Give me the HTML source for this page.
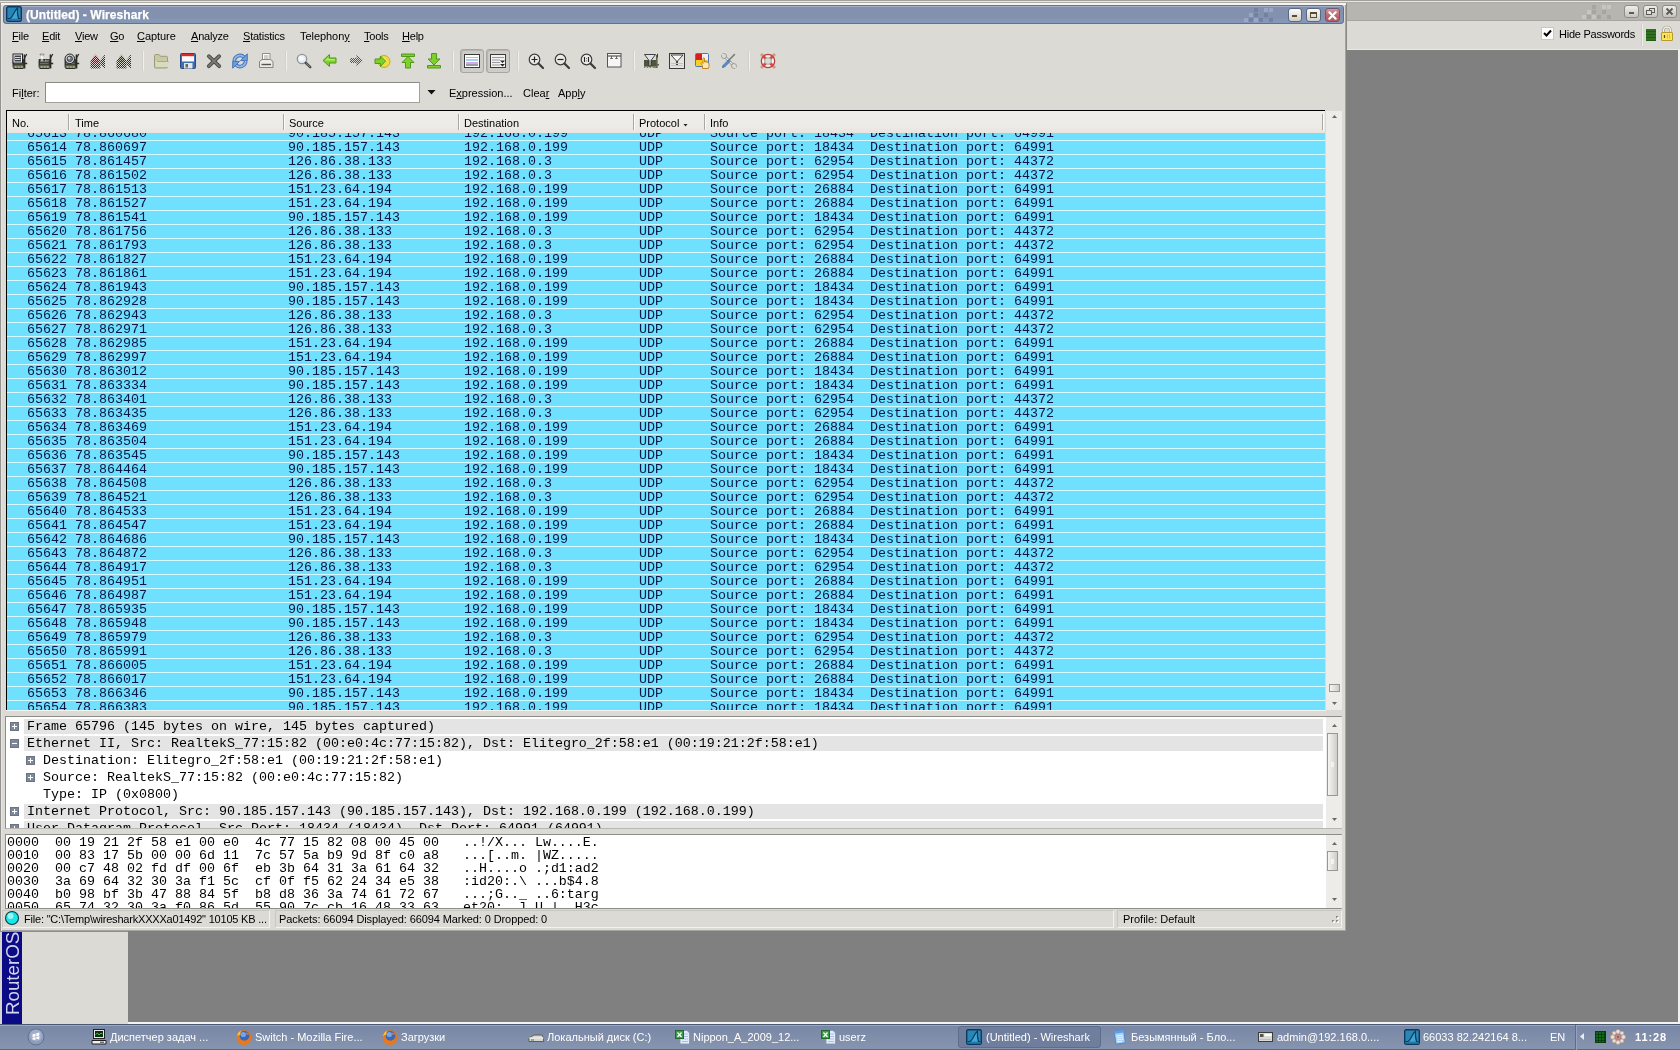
<!DOCTYPE html>
<html><head><meta charset="utf-8"><title>(Untitled) - Wireshark</title>
<style>
html,body{margin:0;padding:0}
body{width:1680px;height:1050px;overflow:hidden;background:#808080;position:relative;font-family:"Liberation Sans",sans-serif;font-size:11px;color:#000;line-height:13px}
.a{position:absolute}
.t{position:absolute;white-space:pre;font-family:"Liberation Sans",sans-serif;font-size:11px;line-height:13px}
.m{position:absolute;white-space:pre;font-family:"Liberation Mono",monospace;font-size:13.33px;margin:0}
u{text-decoration:underline;text-underline-offset:1px}
svg{position:absolute;overflow:visible}
</style></head><body><div id="wrap" style="position:absolute;left:0;top:0;width:1680px;height:1050px;will-change:transform">

<!-- top strip of background app -->
<div class="a" style="left:0;top:3px;width:1px;height:1021px;background:#939290"></div>
<div class="a" style="left:0;top:0;width:1680px;height:1px;background:#a09f9a"></div>
<div class="a" style="left:0;top:1px;width:1680px;height:1px;background:#eae8e3"></div>
<div class="a" style="left:0;top:2px;width:1680px;height:1px;background:#adaba6"></div>
<!-- right background window: inactive title + toolbar -->
<div class="a" style="left:1347px;top:3px;width:333px;height:17px;background:#b7b5af"></div>
<div class="a" style="left:1347px;top:20px;width:333px;height:1px;background:#a8a6a0"></div>
<div class="a" style="left:1347px;top:21px;width:333px;height:29px;background:#dcdad5;box-shadow:inset 0 -1px 0 #e9e8e4"></div>
<div class="a" style="left:1346px;top:3px;width:1px;height:47px;background:#8a8986"></div>
<div class="a" style="left:1678px;top:50px;width:2px;height:974px;background:#f1f0ee"></div>
<!-- bottom-left: RouterOS strip + panel -->
<div class="a" style="left:0;top:931px;width:128px;height:1px;background:#8f8e8b"></div>
<div class="a" style="left:0;top:932px;width:2px;height:92px;background:#d6d4cf"></div>
<div class="a" style="left:2px;top:932px;width:20px;height:92px;background:#0b0b86;overflow:hidden"></div>
<div class="a" style="left:22px;top:932px;width:106px;height:92px;background:#dcdad5"></div>
<div class="a" style="left:128px;top:1022px;width:1552px;height:2px;background:#f4f3f1"></div>

<div class="a" style="left:0;top:1024px;width:1680px;height:26px;background:linear-gradient(#7786a4,#8795b0)"></div>
<div class="a" style="left:0;top:1024px;width:1680px;height:1px;background:#4a5872"></div><div class="a" style="left:0;top:1025px;width:1680px;height:1px;background:#9aa8c6"></div><div class="a" style="left:0;top:1049px;width:1680px;height:1px;background:#5a6785"></div>

<div id="win" class="a" style="left:1px;top:3px;width:1345px;height:928px;background:#dcdad5;box-shadow:inset 0 2px 0 #f6f5f3, inset 1px 0 0 #e6e5e1, inset -1px -1px 0 #a5a39f"></div>
<div class="a" style="left:3px;top:5px;width:1341px;height:19px;border-radius:4px;background:linear-gradient(#8390ae 0,#8490ae 70%,#8196b8 76%,#8797b5 100%);box-shadow:inset 0 0 0 1px #64718d, inset 0 2px 0 #a5afc8"></div>
<svg style="left:6px;top:6px" width="16" height="16" viewBox="0 0 16 16"><rect x=".700" y=".700" width="14.600" height="14.600" rx="1.500" fill="#2b86b8" stroke="#0b3a5c" stroke-width="1.400"/><path d="M1.500 12.500h2.500C7 11 8.500 4 11.500 2c-.3 3.500 0 7.500 1 10.500h2" fill="#3fa6d6" stroke="#0b3a5c" stroke-width="1.200" stroke-linejoin="round"/><path d="M1.500 13h13v1.500h-13z" fill="#2379a9"/></svg><div class="t" style="left:26px;top:8px;font-size:12px;line-height:14px;font-weight:700;color:#fff;letter-spacing:.08px;-webkit-text-stroke:.25px #fff">(Untitled) - Wireshark</div><svg style="left:1244px;top:7px" width="34" height="18"><rect x="10" y="1" width="4" height="4" fill="#61759c" opacity=".55"/><rect x="20" y="1" width="4" height="4" fill="#a9b8d6" opacity=".55"/><rect x="25" y="1" width="4" height="4" fill="#a9b8d6" opacity=".55"/><rect x="5" y="6" width="4" height="4" fill="#a9b8d6" opacity=".55"/><rect x="10" y="6" width="4" height="4" fill="#61759c" opacity=".55"/><rect x="20" y="6" width="4" height="4" fill="#61759c" opacity=".55"/><rect x="0" y="11" width="4" height="4" fill="#a9b8d6" opacity=".55"/><rect x="5" y="11" width="4" height="4" fill="#61759c" opacity=".55"/><rect x="15" y="11" width="4" height="4" fill="#61759c" opacity=".55"/><rect x="25" y="11" width="4" height="4" fill="#61759c" opacity=".55"/><rect x="10" y="11" width="4" height="4" fill="#a9b8d6" opacity=".55"/></svg><div class="a" style="left:1288px;top:8px;width:14px;height:14px;box-sizing:border-box;border:1px solid #5a6888;border-radius:3px;background:linear-gradient(#fbfbfa,#e6e4df 55%,#cfcdc7)"></div><div class="a" style="left:1292px;top:15px;width:5px;height:2px;background:#5c4c2c"></div><div class="a" style="left:1306px;top:8px;width:15px;height:14px;box-sizing:border-box;border:1px solid #5a6888;border-radius:3px;background:linear-gradient(#fbfbfa,#e6e4df 55%,#cfcdc7)"></div><div class="a" style="left:1310px;top:12px;width:7px;height:6px;box-sizing:border-box;border:1px solid #5c4c2c;border-top-width:2px"></div><div class="a" style="left:1325px;top:8px;width:15px;height:14px;box-sizing:border-box;border:1px solid #6f5a70;border-radius:3px;background:linear-gradient(#d3979c,#c0656d 55%,#b55a63)"></div><svg style="left:1328px;top:10.500px" width="9" height="9" viewBox="0 0 9 9"><path d="M1.300 1.300l6.400 6.400M7.700 1.300l-6.400 6.400" stroke="#fff" stroke-width="2.100" stroke-linecap="round"/></svg><div class="t" style="left:12px;top:30px;letter-spacing:-.22px"><u>F</u>ile</div><div class="t" style="left:42px;top:30px;letter-spacing:-.22px"><u>E</u>dit</div><div class="t" style="left:75px;top:30px;letter-spacing:-.22px"><u>V</u>iew</div><div class="t" style="left:110px;top:30px;letter-spacing:-.22px"><u>G</u>o</div><div class="t" style="left:137px;top:30px;letter-spacing:-.05px"><u>C</u>apture</div><div class="t" style="left:191px;top:30px;letter-spacing:-.22px"><u>A</u>nalyze</div><div class="t" style="left:243px;top:30px;letter-spacing:-.22px"><u>S</u>tatistics</div><div class="t" style="left:300px;top:30px;letter-spacing:-.05px">Telephon<u>y</u></div><div class="t" style="left:364px;top:30px;letter-spacing:-.22px"><u>T</u>ools</div><div class="t" style="left:402px;top:30px;letter-spacing:-.22px"><u>H</u>elp</div><svg style="left:12px;top:53px" width="16" height="16" viewBox="0 0 16 16"><path d="M1 6.500h10.500v8H1z" fill="#3f4539" stroke="#1e211b" stroke-width=".8"/><path d="M2 8.500h8.500M2 10.500h8.500" stroke="#69735a" stroke-width="1"/><path d="M1.500 12.500h10v2.500h-10z" fill="#7a8162"/><path d="M1.500 15.500h10" stroke="#2a2d24" stroke-width="1"/><path d="M3 14h1.500M6 14h1.500M9 14h1.500" stroke="#c9cba6" stroke-width="1"/><path d="M12.500 1.500v14" stroke="#2a2d24" stroke-width="1.700"/><path d="M12.800 4.500l2-3.500" stroke="#2a2d24" stroke-width="1.200"/><path d="M13 10.500h2.200" stroke="#2a2d24" stroke-width="1.500"/><rect x="1" y="1" width="9.500" height="9" fill="#f2f2f2" stroke="#1f2226" stroke-width="1"/><rect x="2.500" y="2.500" width="6.500" height="6" fill="#3c3f45"/><path d="M3 4.500h5.500M3 6.500h5.500" stroke="#d5d8dc" stroke-width="1"/></svg><svg style="left:38px;top:53px" width="16" height="16" viewBox="0 0 16 16"><path d="M1 6.500h10.500v8H1z" fill="#3f4539" stroke="#1e211b" stroke-width=".8"/><path d="M2 8.500h8.500M2 10.500h8.500" stroke="#69735a" stroke-width="1"/><path d="M1.500 12.500h10v2.500h-10z" fill="#7a8162"/><path d="M1.500 15.500h10" stroke="#2a2d24" stroke-width="1"/><path d="M3 14h1.500M6 14h1.500M9 14h1.500" stroke="#c9cba6" stroke-width="1"/><path d="M12.500 1.500v14" stroke="#2a2d24" stroke-width="1.700"/><path d="M12.800 4.500l2-3.500" stroke="#2a2d24" stroke-width="1.200"/><path d="M13 10.500h2.200" stroke="#2a2d24" stroke-width="1.500"/><path d="M2.500 1.500h3M4 1.500v6M2.500 7.500h3" stroke="#fff" stroke-width="1.300"/><path d="M2 1h4v1H2zM2 7h4v1H2z" fill="none" stroke="#2a2d24" stroke-width=".4"/><path d="M7 7.500h1.500M9.500 7.500h1" stroke="#aeb493" stroke-width="1.400"/></svg><svg style="left:64px;top:53px" width="16" height="16" viewBox="0 0 16 16"><path d="M1 6.500h10.500v8H1z" fill="#3f4539" stroke="#1e211b" stroke-width=".8"/><path d="M2 8.500h8.500M2 10.500h8.500" stroke="#69735a" stroke-width="1"/><path d="M1.500 12.500h10v2.500h-10z" fill="#7a8162"/><path d="M1.500 15.500h10" stroke="#2a2d24" stroke-width="1"/><path d="M3 14h1.500M6 14h1.500M9 14h1.500" stroke="#c9cba6" stroke-width="1"/><path d="M12.500 1.500v14" stroke="#2a2d24" stroke-width="1.700"/><path d="M12.800 4.500l2-3.500" stroke="#2a2d24" stroke-width="1.200"/><path d="M13 10.500h2.200" stroke="#2a2d24" stroke-width="1.500"/><circle cx="5.800" cy="5.800" r="4.800" fill="#c9ccd0" stroke="#24272a" stroke-width="1"/><circle cx="5.800" cy="5.800" r="2.700" fill="#7b8087" stroke="#3a3d42" stroke-width=".9"/><circle cx="5" cy="5" r="1" fill="#e9ebee"/></svg><svg style="left:90px;top:53px" width="16" height="16" viewBox="0 0 16 16"><defs><pattern id="st" width="2" height="2" patternUnits="userSpaceOnUse"><rect width="1" height="1" fill="#2c2e28"/><rect x="1" y="1" width="1" height="1" fill="#2c2e28"/></pattern></defs><circle cx="5.500" cy="6.500" r="3.200" fill="#e7a7ab"/><circle cx="5.500" cy="6" r="1.500" fill="#f6dadb"/><path d="M.500 8L5.500 1.500 10.500 8v7.500H.500z" fill="url(#st)"/><path d="M10.500 7l4.500-5.500v14L10.500 11z" fill="url(#st)"/></svg><svg style="left:116px;top:53px" width="16" height="16" viewBox="0 0 16 16"><circle cx="5.500" cy="6.500" r="3" fill="#b4b89c"/><path d="M.500 8L5.500 1.500 10.500 8v7.500H.500z" fill="url(#st)"/><path d="M10.500 7l4.500-5.500v14L10.500 11z" fill="url(#st)"/></svg><div class="a" style="left:142px;top:51px;width:1px;height:20px;background:#d2d0cb"></div><div class="a" style="left:143px;top:51px;width:1px;height:20px;background:#f1f0ed"></div><svg style="left:154px;top:53px" width="16" height="16" viewBox="0 0 16 16"><path d="M.5 2.500c0-.6.400-1 1-1h3.500l1.500 1.800h6c.6 0 1 .4 1 1V14c0 .6-.4 1-1 1h-11c-.6 0-1-.4-1-1z" fill="#c6c9a3" stroke="#9a9d78"/><path d="M1.500 8h13v6h-13z" fill="#d9dbbd"/><path d="M3 8.500h11.500" stroke="#a9ac88"/></svg><svg style="left:180px;top:53px" width="16" height="16" viewBox="0 0 16 16"><rect x=".5" y=".5" width="15" height="15" rx="1" fill="#3f6db0" stroke="#2a4b80"/><rect x="2" y="1" width="12" height="7.500" fill="#fbfbfb"/><rect x="2" y="1" width="12" height="2.200" fill="#e0242c"/><rect x="4" y="10" width="8.500" height="5.500" fill="#e4e6ea"/><rect x="5.500" y="11" width="2.500" height="3.500" fill="#56705a"/></svg><svg style="left:206px;top:53px" width="16" height="16" viewBox="0 0 16 16"><path d="M2.800 3.200l10.400 10M13.200 3.200l-10.400 10" stroke="#4c4c48" stroke-width="3.800" stroke-linecap="round"/><path d="M2.800 3.200l10.400 10M13.200 3.200l-10.400 10" stroke="#7c7c74" stroke-width="1.800" stroke-linecap="round"/></svg><svg style="left:232px;top:53px" width="16" height="16" viewBox="0 0 16 16"><path d="M2.300 8.200a5.700 5.700 0 0 1 9.800-4" fill="none" stroke="#3d6db3" stroke-width="3.600"/><path d="M2.300 8.200a5.700 5.700 0 0 1 9.800-4" fill="none" stroke="#8fb8ec" stroke-width="1.900"/><path d="M15.300 .800v6.800H8.500z" fill="#6c9ddf" stroke="#3d6db3" stroke-width=".9"/><g transform="rotate(180 8 8)"><path d="M2.300 8.200a5.700 5.700 0 0 1 9.800-4" fill="none" stroke="#3d6db3" stroke-width="3.600"/><path d="M2.300 8.200a5.700 5.700 0 0 1 9.800-4" fill="none" stroke="#8fb8ec" stroke-width="1.900"/><path d="M15.300 .800v6.800H8.500z" fill="#6c9ddf" stroke="#3d6db3" stroke-width=".9"/></g></svg><svg style="left:258px;top:53px" width="16" height="16" viewBox="0 0 16 16"><path d="M4.500.5h7.500v7H4.500z" fill="#fdfdfd" stroke="#8e8e88"/><path d="M6 3h4.500M6 5h4.500" stroke="#a0a09a"/><path d="M1.500 8.500l2.500-2h8.500l2.500 2v6h-13.500z" fill="#ecebe6" stroke="#85847e"/><path d="M3.500 11.500h9.500" stroke="#55554f" stroke-width="1.400"/></svg><div class="a" style="left:285px;top:51px;width:1px;height:20px;background:#d2d0cb"></div><div class="a" style="left:286px;top:51px;width:1px;height:20px;background:#f1f0ed"></div><svg style="left:296px;top:53px" width="16" height="16" viewBox="0 0 16 16"><circle cx="6" cy="6" r="4.700" fill="#e7ecf3" stroke="#8f949c" stroke-width="1.300"/><circle cx="5.400" cy="5.400" r="2.400" fill="#f9fbff"/><path d="M9.800 9.800l4.400 4.400" stroke="#4a4a4a" stroke-width="2.600" stroke-linecap="round"/><path d="M10.500 10.500l3.300 3.300" stroke="#8c8c8c" stroke-width="1" stroke-linecap="round"/></svg><svg style="left:322px;top:53px" width="16" height="16" viewBox="0 0 16 16"><path d="M1 7.500L7.500 1.500v3.500H14v5H7.500v3.500z" fill="#7fcf2f" stroke="#4f9a16" stroke-width="1"/><path d="M3 7.500l3.500-3.200V6h6.500v1.500z" fill="#b3ec73"/></svg><svg style="left:348px;top:53px" width="16" height="16" viewBox="0 0 16 16"><defs><pattern id="sg" width="2" height="2" patternUnits="userSpaceOnUse"><rect width="1" height="1" fill="#4e5f44"/><rect x="1" y="1" width="1" height="1" fill="#4e5f44"/></pattern></defs><path d="M15 7.500L8.500 1.500v3.500H2v5h6.500v3.500z" fill="url(#sg)"/></svg><svg style="left:374px;top:53px" width="16" height="16" viewBox="0 0 16 16"><circle cx="10" cy="8.500" r="6" fill="#f1dc3c" stroke="#c9a91d"/><circle cx="8.500" cy="7" r="3" fill="#f9ef8b" opacity=".7"/><path d="M11.500 8L6.500 3v3H1v4.500h5.500v3z" fill="#7fcf2f" stroke="#4f9a16" stroke-width="1"/></svg><svg style="left:400px;top:53px" width="16" height="16" viewBox="0 0 16 16"><path d="M1.500 1h13v2.500h-13z" fill="#7fcf2f" stroke="#4f9a16" stroke-width="1"/><path d="M8 3.500L14 9.500h-3.500V15h-5V9.500H2z" fill="#7fcf2f" stroke="#4f9a16" stroke-width="1"/></svg><svg style="left:426px;top:53px" width="16" height="16" viewBox="0 0 16 16"><path d="M1.500 12.500h13V15h-13z" fill="#7fcf2f" stroke="#4f9a16" stroke-width="1"/><path d="M8 12L14 6h-3.500V.5h-5V6H2z" fill="#7fcf2f" stroke="#4f9a16" stroke-width="1"/></svg><div class="a" style="left:452px;top:51px;width:1px;height:20px;background:#d2d0cb"></div><div class="a" style="left:453px;top:51px;width:1px;height:20px;background:#f1f0ed"></div><div class="a" style="left:460px;top:49px;width:24px;height:24px;box-sizing:border-box;border:1px solid #a8a6a0;border-radius:3px;background:#cfcdc8;box-shadow:inset 1px 1px 1px #b6b4ae"></div><div class="a" style="left:486px;top:49px;width:24px;height:24px;box-sizing:border-box;border:1px solid #a8a6a0;border-radius:3px;background:#cfcdc8;box-shadow:inset 1px 1px 1px #b6b4ae"></div><svg style="left:464px;top:53px" width="16" height="16" viewBox="0 0 16 16"><rect x=".5" y="1.500" width="15" height="13" fill="#fff" stroke="#3a3a3a"/><path d="M2 4.500h12" stroke="#f0b070"/><path d="M2 6h12v2H2z" fill="#9fd8e8"/><path d="M2 9h12v2H2z" fill="#d8a8f0"/><path d="M2 12h12" stroke="#707080" stroke-width="1.400"/></svg><svg style="left:490px;top:53px" width="16" height="16" viewBox="0 0 16 16"><rect x=".5" y="1.500" width="15" height="13" fill="#f2f2f2" stroke="#3a3a3a"/><path d="M2 4.500h12M2 7h8M2 9.500h8M2 12h8" stroke="#9a9a9a" stroke-width="1.200"/><path d="M10 7.500h5l-2.500 2.500zM10 11h5l-2.500 2.500z" fill="#222"/></svg><div class="a" style="left:517px;top:51px;width:1px;height:20px;background:#d2d0cb"></div><div class="a" style="left:518px;top:51px;width:1px;height:20px;background:#f1f0ed"></div><svg style="left:528px;top:53px" width="16" height="16" viewBox="0 0 16 16"><circle cx="6.500" cy="6.500" r="5.300" fill="#e9e9e6" stroke="#3c3c3c" stroke-width="1.200"/><path d="M10.500 10.500l4.500 4.500" stroke="#3c3c3c" stroke-width="2.200" stroke-linecap="round"/><path d="M3.500 6.500h6M6.500 3.500v6" stroke="#222" stroke-width="1.200"/></svg><svg style="left:554px;top:53px" width="16" height="16" viewBox="0 0 16 16"><circle cx="6.500" cy="6.500" r="5.300" fill="#e9e9e6" stroke="#3c3c3c" stroke-width="1.200"/><path d="M10.500 10.500l4.500 4.500" stroke="#3c3c3c" stroke-width="2.200" stroke-linecap="round"/><path d="M3.500 6.500h6" stroke="#222" stroke-width="1.200"/></svg><svg style="left:580px;top:53px" width="16" height="16" viewBox="0 0 16 16"><circle cx="6.500" cy="6.500" r="5.300" fill="#e9e9e6" stroke="#3c3c3c" stroke-width="1.200"/><path d="M10.500 10.500l4.500 4.500" stroke="#3c3c3c" stroke-width="2.200" stroke-linecap="round"/><path d="M4.500 4v5M8.500 4v5" stroke="#222" stroke-width="1.100"/><path d="M6.200 5.200h.8v.8h-.8zM6.200 7.400h.8v.8h-.8z" fill="#222"/></svg><svg style="left:606px;top:53px" width="16" height="16" viewBox="0 0 16 16"><rect x="1.500" y=".500" width="13.500" height="13.500" fill="#f6f6f4" stroke="#555"/><path d="M2 3h13" stroke="#555" stroke-width="1.200"/><path d="M5.500 3v3M10.500 3v3" stroke="#666"/><path d="M4 5.500h3M9 5.500h3" stroke="#666" stroke-width=".8"/></svg><div class="a" style="left:633px;top:51px;width:1px;height:20px;background:#d2d0cb"></div><div class="a" style="left:634px;top:51px;width:1px;height:20px;background:#f1f0ed"></div><svg style="left:643px;top:53px" width="16" height="16" viewBox="0 0 16 16"><path d="M1 7h12v7H1z" fill="#4d553e"/><path d="M1 13h12v2H1z" fill="#7d8468"/><path d="M13 2h1.600v13H13z" fill="#5d644c"/><path d="M14 1l1-.5v4H14zM14.400 11h1.400v1.500h-1.400z" fill="#3a4030"/><path d="M2 14.500h2M5 14.500h2M8 14.500h2" stroke="#c8c8a0" stroke-width="1"/><path d="M1.500 1.500h11L8 7.500v5.500H6V7.500z" fill="#dfe3e6" stroke="#2f2f2f" stroke-width=".9"/></svg><svg style="left:669px;top:53px" width="16" height="16" viewBox="0 0 16 16"><rect x=".500" y=".500" width="15" height="15" fill="#e4e4e1" stroke="#3a3a3a" stroke-width="1"/><path d="M2 2h12L8.500 8v4.500h-1V8z" fill="#fafafa" stroke="#333" stroke-width=".9"/><path d="M2 10.500h12M2 12.500h12" stroke="#c4c4c0"/></svg><svg style="left:695px;top:53px" width="16" height="16" viewBox="0 0 16 16"><rect x=".500" y=".500" width="13" height="13" rx="1" fill="#f5d21f" stroke="#4a78c0"/><rect x="1" y="1" width="6" height="6" fill="#d81e1e"/><rect x="7" y="1" width="6" height="6" fill="#f0f0f8"/><path d="M8 4v0" /><path d="M7.500 15.500v-3L6 10.500l1-1 1 1V5.500c0-1 1.500-1 1.500 0V9h1v-.5c0-.8 1.300-.8 1.300 0V9.500h.7c.8 0 1.500.5 1.500 1.500v2.500l-.7 2z" fill="#fbe9b5" stroke="#c07818" stroke-width=".9"/></svg><svg style="left:721px;top:53px" width="16" height="16" viewBox="0 0 16 16"><path d="M2.500 2.500L13 13" stroke="#8f8f8a" stroke-width="2.600" stroke-linecap="round"/><path d="M2.500 2.500L13 13" stroke="#e9e9e6" stroke-width="1.200" stroke-linecap="round"/><circle cx="3" cy="3" r="2.400" fill="#e9e9e6" stroke="#8f8f8a" stroke-width=".9"/><path d="M1 1l2.500 2.500" stroke="#dcdad5" stroke-width="1.800"/><circle cx="13" cy="13" r="2.400" fill="#e9e9e6" stroke="#8f8f8a" stroke-width=".9"/><path d="M15 15l-2.500-2.500" stroke="#dcdad5" stroke-width="1.800"/><path d="M13.500 1.500L7 8" stroke="#7d7d78" stroke-width="1.600" stroke-linecap="round"/><path d="M7.500 7L2 12.500 1.500 14.500 3.500 14 9 8.500z" fill="#5b8fd6" stroke="#3565a8" stroke-width=".8"/></svg><div class="a" style="left:748px;top:51px;width:1px;height:20px;background:#d2d0cb"></div><div class="a" style="left:749px;top:51px;width:1px;height:20px;background:#f1f0ed"></div><svg style="left:760px;top:53px" width="16" height="16" viewBox="0 0 16 16"><circle cx="8" cy="8" r="6.700" fill="#f4f1ee" stroke="#b9423a" stroke-width="1.300"/><path d="M3 3l3 3M13 3l-3 3M3 13l3-3M13 13l-3-3" stroke="#d24a40" stroke-width="2.800"/><circle cx="8" cy="8" r="3.300" fill="#dcdad5" stroke="#a8a6a0" stroke-width="1"/><rect x=".5" y=".5" width="3" height="3" rx="1" fill="#c9524a" opacity=".5"/><rect x="12.500" y=".5" width="3" height="3" rx="1" fill="#c9524a" opacity=".5"/><rect x=".5" y="12.500" width="3" height="3" rx="1" fill="#c9524a" opacity=".5"/><rect x="12.500" y="12.500" width="3" height="3" rx="1" fill="#c9524a" opacity=".5"/></svg><div class="t" style="left:12px;top:87px">Fi<u>l</u>ter:</div><div class="a" style="left:45px;top:82px;width:375px;height:21px;box-sizing:border-box;background:#fff;border:1px solid #a3a19c;border-top-color:#8c8a85;border-left-color:#8c8a85"></div><svg style="left:427px;top:90px" width="9" height="5"><path d="M.500 0h8l-4 4.500z" fill="#111"/></svg><div class="t" style="left:449px;top:87px">E<u>x</u>pression...</div><div class="t" style="left:523px;top:87px">Clea<u>r</u></div><div class="t" style="left:558px;top:87px">App<u>l</u>y</div><div class="a" style="left:6px;top:110px;width:1319px;height:600px;background:#000"></div><div class="a" style="left:7px;top:111px;width:1318px;height:22px;background:linear-gradient(#efeeea,#ecebe6 70%,#e9e4df)"></div><div class="a" style="left:68px;top:114px;width:1px;height:16px;background:#a9a7a1"></div><div class="a" style="left:69px;top:114px;width:1px;height:16px;background:#fbfbfa"></div><div class="a" style="left:283px;top:114px;width:1px;height:16px;background:#a9a7a1"></div><div class="a" style="left:284px;top:114px;width:1px;height:16px;background:#fbfbfa"></div><div class="a" style="left:458px;top:114px;width:1px;height:16px;background:#a9a7a1"></div><div class="a" style="left:459px;top:114px;width:1px;height:16px;background:#fbfbfa"></div><div class="a" style="left:633px;top:114px;width:1px;height:16px;background:#a9a7a1"></div><div class="a" style="left:634px;top:114px;width:1px;height:16px;background:#fbfbfa"></div><div class="a" style="left:704px;top:114px;width:1px;height:16px;background:#a9a7a1"></div><div class="a" style="left:705px;top:114px;width:1px;height:16px;background:#fbfbfa"></div><div class="a" style="left:1322px;top:114px;width:1px;height:16px;background:#a9a7a1"></div><div class="a" style="left:1323px;top:114px;width:1px;height:16px;background:#fbfbfa"></div><div class="t" style="left:12px;top:117px">No.</div><div class="t" style="left:75px;top:117px">Time</div><div class="t" style="left:289px;top:117px">Source</div><div class="t" style="left:464px;top:117px">Destination</div><div class="t" style="left:639px;top:117px">Protocol</div><div class="t" style="left:710px;top:117px">Info</div><svg style="left:683px;top:124px" width="5" height="3"><path d="M.500 0h4l-2 2.500z" fill="#222"/></svg><div class="a" style="left:7px;top:133px;width:1318px;height:577px;overflow:hidden;background:#70e0ff;color:#0b1745"><div class="a" style="left:0;top:0;width:1318px;height:577px;background:repeating-linear-gradient(to bottom,rgba(0,0,0,0) 0,rgba(0,0,0,0) 7px,#d6fbff 7px,#d6fbff 8px,rgba(0,0,0,0) 8px,rgba(0,0,0,0) 14px)"></div><pre class="m" style="left:20px;top:-6px;line-height:14px;">65613
65614
65615
65616
65617
65618
65619
65620
65621
65622
65623
65624
65625
65626
65627
65628
65629
65630
65631
65632
65633
65634
65635
65636
65637
65638
65639
65640
65641
65642
65643
65644
65645
65646
65647
65648
65649
65650
65651
65652
65653
65654</pre><pre class="m" style="left:68px;top:-6px;line-height:14px;">78.860680
78.860697
78.861457
78.861502
78.861513
78.861527
78.861541
78.861756
78.861793
78.861827
78.861861
78.861943
78.862928
78.862943
78.862971
78.862985
78.862997
78.863012
78.863334
78.863401
78.863435
78.863469
78.863504
78.863545
78.864464
78.864508
78.864521
78.864533
78.864547
78.864686
78.864872
78.864917
78.864951
78.864987
78.865935
78.865948
78.865979
78.865991
78.866005
78.866017
78.866346
78.866383</pre><pre class="m" style="left:281px;top:-6px;line-height:14px;">90.185.157.143
90.185.157.143
126.86.38.133
126.86.38.133
151.23.64.194
151.23.64.194
90.185.157.143
126.86.38.133
126.86.38.133
151.23.64.194
151.23.64.194
90.185.157.143
90.185.157.143
126.86.38.133
126.86.38.133
151.23.64.194
151.23.64.194
90.185.157.143
90.185.157.143
126.86.38.133
126.86.38.133
151.23.64.194
151.23.64.194
90.185.157.143
90.185.157.143
126.86.38.133
126.86.38.133
151.23.64.194
151.23.64.194
90.185.157.143
126.86.38.133
126.86.38.133
151.23.64.194
151.23.64.194
90.185.157.143
90.185.157.143
126.86.38.133
126.86.38.133
151.23.64.194
151.23.64.194
90.185.157.143
90.185.157.143</pre><pre class="m" style="left:457px;top:-6px;line-height:14px;">192.168.0.199
192.168.0.199
192.168.0.3
192.168.0.3
192.168.0.199
192.168.0.199
192.168.0.199
192.168.0.3
192.168.0.3
192.168.0.199
192.168.0.199
192.168.0.199
192.168.0.199
192.168.0.3
192.168.0.3
192.168.0.199
192.168.0.199
192.168.0.199
192.168.0.199
192.168.0.3
192.168.0.3
192.168.0.199
192.168.0.199
192.168.0.199
192.168.0.199
192.168.0.3
192.168.0.3
192.168.0.199
192.168.0.199
192.168.0.199
192.168.0.3
192.168.0.3
192.168.0.199
192.168.0.199
192.168.0.199
192.168.0.199
192.168.0.3
192.168.0.3
192.168.0.199
192.168.0.199
192.168.0.199
192.168.0.199</pre><pre class="m" style="left:632px;top:-6px;line-height:14px;">UDP
UDP
UDP
UDP
UDP
UDP
UDP
UDP
UDP
UDP
UDP
UDP
UDP
UDP
UDP
UDP
UDP
UDP
UDP
UDP
UDP
UDP
UDP
UDP
UDP
UDP
UDP
UDP
UDP
UDP
UDP
UDP
UDP
UDP
UDP
UDP
UDP
UDP
UDP
UDP
UDP
UDP</pre><pre class="m" style="left:703px;top:-6px;line-height:14px;">Source port: 18434  Destination port: 64991
Source port: 18434  Destination port: 64991
Source port: 62954  Destination port: 44372
Source port: 62954  Destination port: 44372
Source port: 26884  Destination port: 64991
Source port: 26884  Destination port: 64991
Source port: 18434  Destination port: 64991
Source port: 62954  Destination port: 44372
Source port: 62954  Destination port: 44372
Source port: 26884  Destination port: 64991
Source port: 26884  Destination port: 64991
Source port: 18434  Destination port: 64991
Source port: 18434  Destination port: 64991
Source port: 62954  Destination port: 44372
Source port: 62954  Destination port: 44372
Source port: 26884  Destination port: 64991
Source port: 26884  Destination port: 64991
Source port: 18434  Destination port: 64991
Source port: 18434  Destination port: 64991
Source port: 62954  Destination port: 44372
Source port: 62954  Destination port: 44372
Source port: 26884  Destination port: 64991
Source port: 26884  Destination port: 64991
Source port: 18434  Destination port: 64991
Source port: 18434  Destination port: 64991
Source port: 62954  Destination port: 44372
Source port: 62954  Destination port: 44372
Source port: 26884  Destination port: 64991
Source port: 26884  Destination port: 64991
Source port: 18434  Destination port: 64991
Source port: 62954  Destination port: 44372
Source port: 62954  Destination port: 44372
Source port: 26884  Destination port: 64991
Source port: 26884  Destination port: 64991
Source port: 18434  Destination port: 64991
Source port: 18434  Destination port: 64991
Source port: 62954  Destination port: 44372
Source port: 62954  Destination port: 44372
Source port: 26884  Destination port: 64991
Source port: 26884  Destination port: 64991
Source port: 18434  Destination port: 64991
Source port: 18434  Destination port: 64991</pre></div><div class="a" style="left:6px;top:710px;width:1320px;height:1px;background:#f3f6f5"></div><div class="a" style="left:1326px;top:111px;width:16px;height:599px;background:#edece8"></div><svg style="left:1332px;top:115px" width="5" height="3"><path d="M0 3h5l-2.500-3z" fill="#6a6964"/></svg><svg style="left:1332px;top:702px" width="5" height="3"><path d="M0 0h5l-2.500 3z" fill="#6a6964"/></svg><div class="a" style="left:1329px;top:684px;width:11px;height:8px;box-sizing:border-box;border:1px solid #9a9893;background:linear-gradient(to right,#f6f5f2,#cfcdc8)"></div><div class="a" style="left:5px;top:716px;width:1337px;height:113px;box-sizing:border-box;background:#fff;border:1px solid #8e8c87;border-right-color:#b9b7b2;border-bottom-color:#b9b7b2"></div><div class="a" style="left:7px;top:717px;width:1318px;height:111px;overflow:hidden"><div class="a" style="left:17px;top:2px;width:1299px;height:15px;background:#e4e4e4"></div><svg style="left:3px;top:5px" width="9" height="9" viewBox="0 0 9 9"><rect width="9" height="9" fill="#7c8797"/><rect x=".500" y=".500" width="8" height="8" fill="none" stroke="#6a7484"/><path d="M2 4.500h5M4.500 2v5" stroke="#fff" stroke-width="1"/></svg><pre class="m" style="left:20px;top:2px;line-height:15px;color:#000">Frame 65796 (145 bytes on wire, 145 bytes captured)</pre><div class="a" style="left:17px;top:19px;width:1299px;height:15px;background:#e4e4e4"></div><svg style="left:3px;top:22px" width="9" height="9" viewBox="0 0 9 9"><rect width="9" height="9" fill="#7c8797"/><rect x=".500" y=".500" width="8" height="8" fill="none" stroke="#6a7484"/><path d="M2 4.500h5" stroke="#fff" stroke-width="1"/></svg><pre class="m" style="left:20px;top:19px;line-height:15px;color:#000">Ethernet II, Src: RealtekS_77:15:82 (00:e0:4c:77:15:82), Dst: Elitegro_2f:58:e1 (00:19:21:2f:58:e1)</pre><svg style="left:19px;top:39px" width="9" height="9" viewBox="0 0 9 9"><rect width="9" height="9" fill="#7c8797"/><rect x=".500" y=".500" width="8" height="8" fill="none" stroke="#6a7484"/><path d="M2 4.500h5M4.500 2v5" stroke="#fff" stroke-width="1"/></svg><pre class="m" style="left:36px;top:36px;line-height:15px;color:#000">Destination: Elitegro_2f:58:e1 (00:19:21:2f:58:e1)</pre><svg style="left:19px;top:56px" width="9" height="9" viewBox="0 0 9 9"><rect width="9" height="9" fill="#7c8797"/><rect x=".500" y=".500" width="8" height="8" fill="none" stroke="#6a7484"/><path d="M2 4.500h5M4.500 2v5" stroke="#fff" stroke-width="1"/></svg><pre class="m" style="left:36px;top:53px;line-height:15px;color:#000">Source: RealtekS_77:15:82 (00:e0:4c:77:15:82)</pre><pre class="m" style="left:36px;top:70px;line-height:15px;color:#000">Type: IP (0x0800)</pre><div class="a" style="left:17px;top:87px;width:1299px;height:15px;background:#e4e4e4"></div><svg style="left:3px;top:90px" width="9" height="9" viewBox="0 0 9 9"><rect width="9" height="9" fill="#7c8797"/><rect x=".500" y=".500" width="8" height="8" fill="none" stroke="#6a7484"/><path d="M2 4.500h5M4.500 2v5" stroke="#fff" stroke-width="1"/></svg><pre class="m" style="left:20px;top:87px;line-height:15px;color:#000">Internet Protocol, Src: 90.185.157.143 (90.185.157.143), Dst: 192.168.0.199 (192.168.0.199)</pre><div class="a" style="left:17px;top:104px;width:1299px;height:15px;background:#e4e4e4"></div><svg style="left:3px;top:107px" width="9" height="9" viewBox="0 0 9 9"><rect width="9" height="9" fill="#7c8797"/><rect x=".500" y=".500" width="8" height="8" fill="none" stroke="#6a7484"/><path d="M2 4.500h5M4.500 2v5" stroke="#fff" stroke-width="1"/></svg><pre class="m" style="left:20px;top:104px;line-height:15px;color:#000">User Datagram Protocol, Src Port: 18434 (18434), Dst Port: 64991 (64991)</pre></div><div class="a" style="left:1326px;top:717px;width:16px;height:111px;background:#edece8"></div><svg style="left:1332px;top:724px" width="5" height="3"><path d="M0 3h5l-2.500-3z" fill="#6a6964"/></svg><svg style="left:1332px;top:818px" width="5" height="3"><path d="M0 0h5l-2.500 3z" fill="#6a6964"/></svg><div class="a" style="left:1327px;top:733px;width:11px;height:63px;box-sizing:border-box;border:1px solid #9a9893;background:linear-gradient(to right,#f6f5f2,#cfcdc8)"></div><div class="a" style="left:1331px;top:762px;width:3px;height:5px;background:#f7f7f5;opacity:.8"></div><div class="a" style="left:5px;top:834px;width:1337px;height:75px;box-sizing:border-box;background:#fff;border:1px solid #8e8c87;border-right-color:#b9b7b2;border-bottom-color:#8e8c87"></div><div class="a" style="left:7px;top:835px;width:1318px;height:73px;overflow:hidden"><pre class="m" style="left:0;top:1px;line-height:13px;color:#000">0000  00 19 21 2f 58 e1 00 e0  4c 77 15 82 08 00 45 00   ..!/X... Lw....E.
0010  00 83 17 5b 00 00 6d 11  7c 57 5a b9 9d 8f c0 a8   ...[..m. |WZ.....
0020  00 c7 48 02 fd df 00 6f  eb 3b 64 31 3a 61 64 32   ..H....o .;d1:ad2
0030  3a 69 64 32 30 3a f1 5c  cf 0f f5 62 24 34 e5 38   :id20:.\ ...b$4.8
0040  b0 98 bf 3b 47 88 84 5f  b8 d8 36 3a 74 61 72 67   ...;G.._ ..6:targ
0050  65 74 32 30 3a f0 86 5d  55 90 7c cb 16 48 33 63   et20:..] U.|..H3c</pre></div><div class="a" style="left:1326px;top:835px;width:16px;height:73px;background:#edece8"></div><svg style="left:1332px;top:842px" width="5" height="3"><path d="M0 3h5l-2.500-3z" fill="#6a6964"/></svg><svg style="left:1332px;top:898px" width="5" height="3"><path d="M0 0h5l-2.500 3z" fill="#6a6964"/></svg><div class="a" style="left:1327px;top:851px;width:11px;height:20px;box-sizing:border-box;border:1px solid #9a9893;background:linear-gradient(to right,#f6f5f2,#cfcdc8)"></div><div class="a" style="left:1331px;top:859px;width:3px;height:5px;background:#f7f7f5;opacity:.8"></div><div class="a" style="left:2px;top:910px;width:268px;height:18px;box-sizing:border-box;border:1px solid #c9c7c2;border-right-color:#f3f2ef;border-bottom-color:#f3f2ef"></div><div class="a" style="left:275px;top:910px;width:839px;height:18px;box-sizing:border-box;border:1px solid #c9c7c2;border-right-color:#f3f2ef;border-bottom-color:#f3f2ef"></div><div class="a" style="left:1117px;top:910px;width:225px;height:18px;box-sizing:border-box;border:1px solid #c9c7c2;border-right-color:#f3f2ef;border-bottom-color:#f3f2ef"></div><svg style="left:4px;top:910px" width="16" height="16" viewBox="0 0 16 16"><circle cx="8" cy="8" r="6.500" fill="#19e6e6" stroke="#083c46" stroke-width="1.100"/><circle cx="6.500" cy="6" r="3" fill="#b5fbfb" opacity=".8"/></svg><div class="t" style="left:24px;top:913px;letter-spacing:-.2px">File: "C:\Temp\wiresharkXXXXa01492" 10105 KB ...</div><div class="t" style="left:279px;top:913px;letter-spacing:-.1px">Packets: 66094 Displayed: 66094 Marked: 0 Dropped: 0</div><div class="t" style="left:1123px;top:913px">Profile: Default</div><svg style="left:1331px;top:915px" width="9" height="9"><rect x="5" y="1" width="2" height="2" fill="#8a8884"/><rect x="1" y="5" width="2" height="2" fill="#8a8884"/><rect x="5" y="5" width="2" height="2" fill="#8a8884"/><rect x="6" y="2" width="2" height="2" fill="#fff" opacity=".8"/><rect x="2" y="6" width="2" height="2" fill="#fff" opacity=".8"/><rect x="6" y="6" width="2" height="2" fill="#fff" opacity=".8"/></svg><div class="a" style="left:2px;top:932px;width:20px;height:92px;overflow:hidden"><div style="position:absolute;left:.600px;top:82.500px;transform:rotate(-90deg) scaleX(1.04);transform-origin:0 0;white-space:pre;font-size:18px;line-height:20px;color:#d4d5ee;font-family:'Liberation Sans',sans-serif">RouterOS</div></div><svg style="left:1582px;top:4px" width="34" height="18"><rect x="10" y="1" width="4" height="4" fill="#9a9892" opacity=".55"/><rect x="20" y="1" width="4" height="4" fill="#d6d4cf" opacity=".55"/><rect x="25" y="1" width="4" height="4" fill="#d6d4cf" opacity=".55"/><rect x="5" y="6" width="4" height="4" fill="#d6d4cf" opacity=".55"/><rect x="10" y="6" width="4" height="4" fill="#9a9892" opacity=".55"/><rect x="20" y="6" width="4" height="4" fill="#9a9892" opacity=".55"/><rect x="0" y="11" width="4" height="4" fill="#d6d4cf" opacity=".55"/><rect x="5" y="11" width="4" height="4" fill="#9a9892" opacity=".55"/><rect x="15" y="11" width="4" height="4" fill="#9a9892" opacity=".55"/><rect x="25" y="11" width="4" height="4" fill="#9a9892" opacity=".55"/><rect x="10" y="11" width="4" height="4" fill="#d6d4cf" opacity=".55"/></svg><div class="a" style="left:1624px;top:5px;width:15px;height:13px;box-sizing:border-box;border:1px solid #8f8d88;border-radius:3px;background:linear-gradient(#efeeea,#d9d7d2 55%,#c6c4be)"></div><div class="a" style="left:1629px;top:12px;width:5px;height:2px;background:#5c5b57"></div><div class="a" style="left:1643px;top:5px;width:15px;height:13px;box-sizing:border-box;border:1px solid #8f8d88;border-radius:3px;background:linear-gradient(#efeeea,#d9d7d2 55%,#c6c4be)"></div><svg style="left:1646px;top:7px" width="9" height="9"><rect x="3.500" y="1.500" width="5" height="4" fill="none" stroke="#5c5b57"/><rect x=".500" y="3.500" width="5" height="4" fill="#e3e1dc" stroke="#5c5b57"/></svg><div class="a" style="left:1662px;top:5px;width:15px;height:13px;box-sizing:border-box;border:1px solid #8f8d88;border-radius:3px;background:linear-gradient(#efeeea,#d9d7d2 55%,#c6c4be)"></div><svg style="left:1665px;top:7px" width="9" height="9" viewBox="0 0 9 9"><path d="M1.500 1.500l6 6M7.500 1.500l-6 6" stroke="#5c5b57" stroke-width="1.800"/></svg><div class="a" style="left:1541px;top:27px;width:13px;height:13px;box-sizing:border-box;background:#fff;border:1px solid #c9c7c2"></div><svg style="left:1543px;top:29px" width="9" height="9" viewBox="0 0 9 9"><path d="M1 4l2.500 2.500L8 1.500" fill="none" stroke="#000" stroke-width="2"/></svg><div class="t" style="left:1559px;top:28px;letter-spacing:-.25px">Hide Passwords</div><div class="a" style="left:1646px;top:29px;width:10px;height:12px;background:repeating-linear-gradient(#2f701e 0,#2f701e 2px,#245a16 2px,#245a16 3px)"></div><div class="a" style="left:1641px;top:24px;width:1px;height:22px;background:#cfcdc8"></div><div class="a" style="left:1642px;top:24px;width:1px;height:22px;background:#efeeeb"></div><svg style="left:1660px;top:26px" width="14" height="15" viewBox="0 0 14 15"><path d="M3.500 7V4.500a3.500 3.500 0 0 1 7 0V7" fill="none" stroke="#9a977f" stroke-width="2.600"/><path d="M3.500 7V4.500a3.500 3.500 0 0 1 7 0V7" fill="none" stroke="#f4f3ea" stroke-width="1.400"/><rect x="1.500" y="6.500" width="11" height="8" rx=".5" fill="#fbe45c" stroke="#b99a2a"/><path d="M4.500 9v3" stroke="#5a4a10" stroke-width="1.200"/><path d="M7.500 8.500v4M9.500 8.500v4" stroke="#e8b830"/></svg><svg style="left:27px;top:1028px" width="18" height="18" viewBox="0 0 18 18"><circle cx="9" cy="9" r="8" fill="#8d9cbb" stroke="#5f7196" stroke-width="1"/><circle cx="9" cy="7.500" r="6" fill="#a7b4cd" opacity=".8"/><path d="M5.500 6.500l3-1v3l-3 .6zM9.300 5.300l3-.9v3l-3 .8zM5.500 9.700l3-.6v2.900l-3-.6zM9.300 8.900l3-.8v3.400l-3-.7z" fill="#fff"/></svg><div class="a" style="left:958px;top:1026px;width:143px;height:22px;box-sizing:border-box;border:1px solid #5f6d8c;border-radius:3px;background:#6f7e9d"></div><svg style="left:91px;top:1029px" width="16" height="16" viewBox="0 0 16 16"><rect x="2.500" y=".500" width="11" height="9" fill="#e9e9e4" stroke="#222"/><rect x="4" y="2" width="8" height="6" fill="#0b2a12"/><path d="M4.500 5.500l2-1.500 1.500 2 2-2 1.500 1" stroke="#3fe04f" fill="none" stroke-width=".9"/><path d="M1 11.500h14v3.500H1z" fill="#f1f1ec" stroke="#222"/><path d="M9 13.200h4" stroke="#333"/></svg><svg style="left:236px;top:1029px" width="16" height="16" viewBox="0 0 16 16"><circle cx="8" cy="8.500" r="7.300" fill="#e2741d"/><circle cx="8.300" cy="7" r="5" fill="#3568c0"/><circle cx="7.300" cy="5.500" r="2.600" fill="#7fb0ee" opacity=".85"/><path d="M.800 8C1 5 2.500 2.500 5 1.500 4 3 4 4.500 4.500 5.500 3.500 6 3.300 7.500 4 9c.8 1.800 2.500 2.800 4.500 2.800 2.300 0 4.200-1.500 4.800-3.500.3 1 .2 2.200-.3 3.200.8-.8 1.500-2 1.800-3.500.5 4-2.500 7.800-7 7.800S.500 12.500.800 8z" fill="#e8791c"/><path d="M1 7.500C1.500 4.500 3 2.500 5.200 1.500 4.200 3 4.200 4.500 4.600 5.500 3 5.500 1.800 6.300 1 7.500z" fill="#f8c840"/><path d="M9.500 3.500c1.500 0 3 .8 3.800 2.300-1-.5-2-.5-2.800 0z" fill="#e8791c"/></svg><svg style="left:382px;top:1029px" width="16" height="16" viewBox="0 0 16 16"><circle cx="8" cy="8.500" r="7.300" fill="#e2741d"/><circle cx="8.300" cy="7" r="5" fill="#3568c0"/><circle cx="7.300" cy="5.500" r="2.600" fill="#7fb0ee" opacity=".85"/><path d="M.800 8C1 5 2.500 2.500 5 1.500 4 3 4 4.500 4.500 5.500 3.500 6 3.300 7.500 4 9c.8 1.800 2.500 2.800 4.500 2.800 2.300 0 4.200-1.500 4.800-3.500.3 1 .2 2.200-.3 3.200.8-.8 1.500-2 1.800-3.500.5 4-2.500 7.800-7 7.800S.500 12.500.800 8z" fill="#e8791c"/><path d="M1 7.500C1.500 4.500 3 2.500 5.200 1.500 4.200 3 4.200 4.500 4.600 5.500 3 5.500 1.800 6.300 1 7.500z" fill="#f8c840"/><path d="M9.500 3.500c1.500 0 3 .8 3.800 2.300-1-.5-2-.5-2.800 0z" fill="#e8791c"/></svg><svg style="left:528px;top:1029px" width="16" height="16" viewBox="0 0 16 16"><path d="M1 9l5-3h8l1.500 3v3.500H1z" fill="#d6d6d2" stroke="#55554f" stroke-width=".9"/><path d="M1 9h14.500" stroke="#f5f5f2"/><path d="M3 11h3" stroke="#3a8a3a"/></svg><svg style="left:675px;top:1029px" width="16" height="16" viewBox="0 0 16 16"><path d="M5 1.500h7l2.500 2.500v11H5z" fill="#e4ecf9" stroke="#7f96bd" stroke-width=".9"/><path d="M7 5h6M7 7.500h6M7 10h6M7 12.500h6" stroke="#a9badb" stroke-width=".9"/><rect x=".500" y="1.500" width="8" height="8" fill="#3a9a46" stroke="#1f6a2a"/><path d="M2.500 3.500l4 4.500M6.500 3.500l-4 4.500" stroke="#fff" stroke-width="1.300"/></svg><svg style="left:821px;top:1029px" width="16" height="16" viewBox="0 0 16 16"><path d="M5 1.500h7l2.500 2.500v11H5z" fill="#e4ecf9" stroke="#7f96bd" stroke-width=".9"/><path d="M7 5h6M7 7.500h6M7 10h6M7 12.500h6" stroke="#a9badb" stroke-width=".9"/><rect x=".500" y="1.500" width="8" height="8" fill="#3a9a46" stroke="#1f6a2a"/><path d="M2.500 3.500l4 4.500M6.500 3.500l-4 4.500" stroke="#fff" stroke-width="1.300"/></svg><svg style="left:966px;top:1029px" width="16" height="16" viewBox="0 0 16 16"><rect x=".700" y=".700" width="14.600" height="14.600" rx="1.500" fill="#2b86b8" stroke="#0b3a5c" stroke-width="1.400"/><path d="M1.500 12.500h2.500C7 11 8.500 4 11.500 2c-.3 3.500 0 7.500 1 10.500h2" fill="#3fa6d6" stroke="#0b3a5c" stroke-width="1.200" stroke-linejoin="round"/><path d="M1.500 13h13v1.500h-13z" fill="#2379a9"/></svg><svg style="left:1112px;top:1029px" width="16" height="16" viewBox="0 0 16 16"><g transform="rotate(-8 8 8)"><path d="M3 1.500h9.500v13H3z" fill="#a9d0f5" stroke="#4f86c6" stroke-width=".9"/><path d="M3 1.500h9.500v2.500H3z" fill="#5f9fe6"/><path d="M4.500 6.500h6.500M4.500 8.500h6.500M4.500 10.500h6.500M4.500 12.500h5" stroke="#e9f3fd" stroke-width=".9"/></g></svg><svg style="left:1258px;top:1029px" width="16" height="16" viewBox="0 0 16 16"><rect x=".500" y="3.500" width="14" height="9" fill="#d9d9d5" stroke="#3c3c38"/><rect x="2" y="5" width="3.500" height="3" fill="#55554f"/><path d="M6.500 6h7" stroke="#fff" stroke-width="2.200"/><path d="M2 10.500h11" stroke="#bdbdb8" stroke-width="1"/></svg><svg style="left:1404px;top:1029px" width="16" height="16" viewBox="0 0 16 16"><rect x=".700" y=".700" width="14.600" height="14.600" rx="1.500" fill="#2b86b8" stroke="#0b3a5c" stroke-width="1.400"/><path d="M1.500 12.500h2.500C7 11 8.500 4 11.500 2c-.3 3.500 0 7.500 1 10.500h2" fill="#3fa6d6" stroke="#0b3a5c" stroke-width="1.200" stroke-linejoin="round"/><path d="M1.500 13h13v1.500h-13z" fill="#2379a9"/></svg><div class="t" style="left:110px;top:1031px;color:#fff;">Диспетчер задач ...</div><div class="t" style="left:255px;top:1031px;color:#fff;">Switch - Mozilla Fire...</div><div class="t" style="left:401px;top:1031px;color:#fff;">Загрузки</div><div class="t" style="left:547px;top:1031px;color:#fff;">Локальный диск (C:)</div><div class="t" style="left:693px;top:1031px;color:#fff;">Nippon_A_2009_12...</div><div class="t" style="left:839px;top:1031px;color:#fff;">userz</div><div class="t" style="left:986px;top:1031px;color:#fff;">(Untitled) - Wireshark</div><div class="t" style="left:1131px;top:1031px;color:#fff;">Безымянный - Бло...</div><div class="t" style="left:1277px;top:1031px;color:#fff;">admin@192.168.0....</div><div class="t" style="left:1423px;top:1031px;color:#fff;">66033 82.242164 8...</div><div class="t" style="left:1550px;top:1031px;color:#fff;">EN</div><div class="a" style="left:1575px;top:1025px;width:1px;height:25px;background:#5f6d8c"></div><div class="a" style="left:1576px;top:1025px;width:1px;height:25px;background:#95a3c0"></div><svg style="left:1580px;top:1033px" width="4" height="7"><path d="M4 0v7L0 3.500z" fill="#e8ecf5"/></svg><div class="a" style="left:1595px;top:1031px;width:11px;height:12px;background:#0f6a1a;background-image:repeating-linear-gradient(to right,rgba(0,40,0,.55) 0,rgba(0,40,0,.55) 1px,rgba(0,0,0,0) 1px,rgba(0,0,0,0) 3px),repeating-linear-gradient(to bottom,rgba(0,40,0,.55) 0,rgba(0,40,0,.55) 1px,rgba(0,0,0,0) 1px,rgba(0,0,0,0) 3px);box-shadow:inset 0 0 0 1px #0a3a0e"></div><svg style="left:1610px;top:1029px" width="16" height="16" viewBox="0 0 14 14"><g fill="#f0ddd4" stroke="#b89888" stroke-width=".5"><circle cx="7" cy="2.300" r="1.900"/><circle cx="7" cy="11.700" r="1.900"/><circle cx="2.300" cy="7" r="1.900"/><circle cx="11.700" cy="7" r="1.900"/><circle cx="3.600" cy="3.600" r="1.700"/><circle cx="10.400" cy="3.600" r="1.700"/><circle cx="3.600" cy="10.400" r="1.700"/><circle cx="10.400" cy="10.400" r="1.700"/></g><circle cx="7" cy="7" r="2.200" fill="#cf8a7c"/><circle cx="7" cy="7" r="1" fill="#a8584c"/></svg><div class="t" style="left:1635px;top:1031px;color:#fff;font-weight:700;letter-spacing:0.9px;">11:28</div></div></body></html>
